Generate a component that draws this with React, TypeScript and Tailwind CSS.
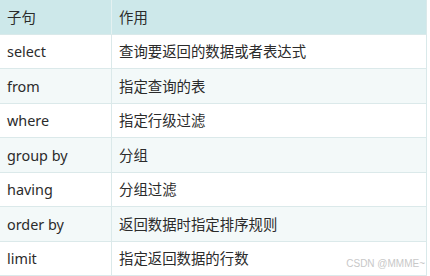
const rows: [string, string][] = [
  ['select', '查询要返回的数据或者表达式'],
  ['from', '指定查询的表'],
  ['where', '指定行级过滤'],
  ['group by', '分组'],
  ['having', '分组过滤'],
  ['order by', '返回数据时指定排序规则'],
  ['limit', '指定返回数据的行数'],
];

export default function App() {
  return (
    <div
      className="relative w-[430px] h-[276px] bg-white text-[#2b2b2b] text-[14.4px] overflow-hidden"
      style={{ fontFamily: '"Noto Sans", "Noto Sans CJK SC", sans-serif' }}
    >
      <div className="w-[427px] border-r border-[#d9e9ea]">
        <div className="flex h-[35px] bg-[#cde8ea] border-b border-[#d9e9ea]">
          <div className="w-[112px] pl-[7px] pt-[1px] flex items-center border-r border-[#e4f1f1]">子句</div>
          <div className="flex-1 pl-[7px] pt-[1px] flex items-center">作用</div>
        </div>
        {rows.map(([k, v], i) => (
          <div
            key={k}
            className={`flex border-b border-[#dbe9ea] ${i % 2 === 0 ? 'bg-white h-[34px]' : 'bg-[#f3f9f9] h-[35px]'}`}
          >
            <div className="w-[112px] pl-[7px] pt-[1px] flex items-center border-r border-[#dbe9ea]">{k}</div>
            <div className="flex-1 pl-[7px] pt-[1px] flex items-center">{v}</div>
          </div>
        ))}
      </div>
      <div
        className="absolute right-[5px] bottom-[5px] text-[10px] text-[#c8c8c8]"
        style={{ fontFamily: '"Liberation Sans", sans-serif' }}
      >
        CSDN @MMME~
      </div>
    </div>
  );
}
